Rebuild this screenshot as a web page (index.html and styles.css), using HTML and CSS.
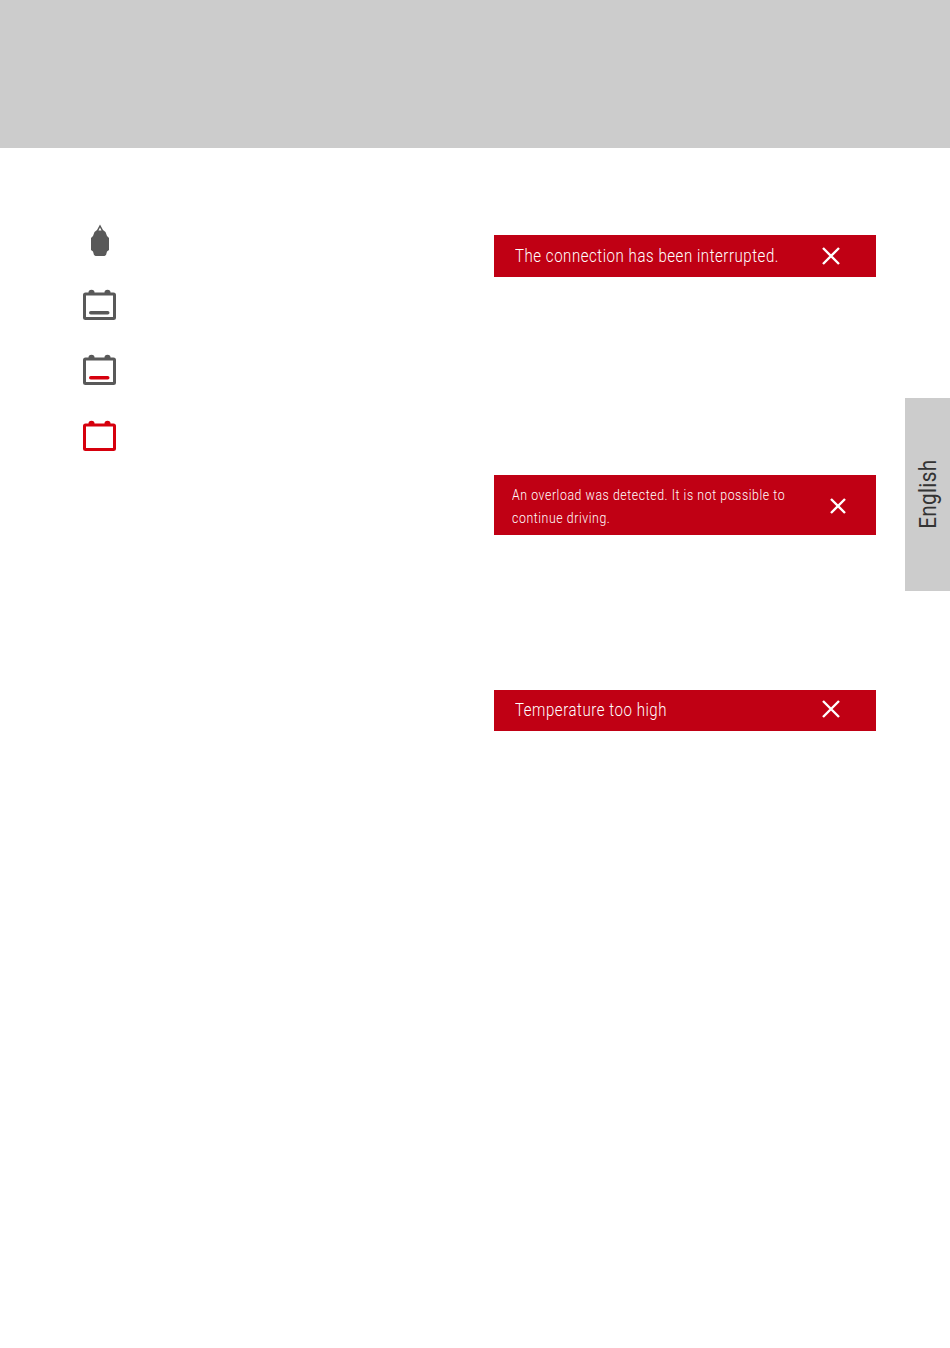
FILE: index.html
```html
<!DOCTYPE html>
<html lang="en">
<head>
<meta charset="utf-8">
<title>Status messages</title>
<link rel="stylesheet" href="styles.css">
</head>
<body>
<header class="top-band"></header>
<main class="content">
  <div class="icons">
    <svg class="icon icon-plug" width="34" height="32" viewBox="0 0 34 32">
      <path class="plug-fill" d="M17 .5 20 6 22.500 8 24 12 26 14V26L24 27.500 23 31 21.500 32H12.500L11 31 10 27.500 8 26V14L10 12 11.500 8 14 6Z"/>
      <path class="plug-cut" d="M17 3.500 15.500 6.500H18.500Z"/>
    </svg>
    <svg class="icon icon-batt" width="34" height="32" viewBox="0 0 34 32">
      <path class="batt-term" d="M5.500 4.500V3.500Q5.500 .8 8.500 .8 11.500 .8 11.500 3.500V4.500ZM21.500 4.500V3.500Q21.500 .8 24.500 .8 27.500 .8 27.500 3.500V4.500Z"/>
      <rect class="batt-body" x="1.500" y="5" width="30" height="24.500" rx="1"/>
      <rect class="level-grey" x="6" y="22" width="20.500" height="3.500" rx="1.750"/>
    </svg>
    <svg class="icon icon-batt" width="34" height="32" viewBox="0 0 34 32">
      <path class="batt-term" d="M5.500 4.500V3.500Q5.500 .8 8.500 .8 11.500 .8 11.500 3.500V4.500ZM21.500 4.500V3.500Q21.500 .8 24.500 .8 27.500 .8 27.500 3.500V4.500Z"/>
      <rect class="batt-body" x="1.500" y="5" width="30" height="24.500" rx="1"/>
      <rect class="level-red" x="6" y="22" width="20.500" height="3.500" rx="1.750"/>
    </svg>
    <svg class="icon icon-batt icon-alert" width="34" height="32" viewBox="0 0 34 32">
      <path class="batt-term" d="M5.500 4.500V3.500Q5.500 .8 8.500 .8 11.500 .8 11.500 3.500V4.500ZM21.500 4.500V3.500Q21.500 .8 24.500 .8 27.500 .8 27.500 3.500V4.500Z"/>
      <rect class="batt-body" x="1.500" y="5" width="30" height="24.500" rx="1"/>
    </svg>
  </div>
  <div class="alerts">
    <div class="alert alert-first">
      <span class="alert-text">The connection has been interrupted.</span>
      <svg class="close" width="20" height="20" viewBox="0 0 20 20"><path d="M2 2 18 18M18 2 2 18"/></svg>
    </div>
    <div class="alert alert-small">
      <span class="alert-text">An overload was detected. It is not possible to<br>continue driving.</span>
      <svg class="close" width="18" height="18" viewBox="0 0 18 18"><path d="M2 2 16 16M16 2 2 16"/></svg>
    </div>
    <div class="alert alert-last">
      <span class="alert-text">Temperature too high</span>
      <svg class="close" width="20" height="20" viewBox="0 0 20 20"><path d="M2 2 18 18M18 2 2 18"/></svg>
    </div>
  </div>
</main>
<aside class="lang-tab"><span class="lang-label">English</span></aside>
</body>
</html>
```
FILE: styles.css
```css
html, body {
  margin: 0;
  padding: 0;
  background: #fff;
}
body {
  height: 1348px;
  overflow: hidden;
  font-family: Roboto, "Liberation Sans", sans-serif;
  font-weight: 300;
}
.top-band {
  height: 148px;
  background: #ccc;
}
.content {
  display: flex;
  padding: 76px 74px 0 83px;
}
.icons {
  display: flex;
  flex-direction: column;
  gap: 33px;
  width: 411px;
  flex: none;
}
.icon { display: block; }
.icon-alert { margin-top: 1px; }
.plug-fill { fill: #595959; }
.plug-cut { fill: #fff; }
.batt-term { fill: #595959; }
.batt-body { fill: none; stroke: #595959; stroke-width: 3; }
.level-grey { fill: #595959; }
.level-red { fill: #d6000d; }
.icon-alert .batt-term { fill: #d6000d; }
.icon-alert .batt-body { stroke: #d6000d; }
.alerts {
  flex: 1;
  padding-top: 11px;
}
.alert {
  display: flex;
  align-items: center;
  justify-content: space-between;
  background: #c00014;
  color: #fff;
  font-size: 19px;
  letter-spacing: 0.7px;
}
.alert-text {
  display: block;
  white-space: nowrap;
  width: 0;
  flex: 1;
  transform: scaleX(0.79);
  transform-origin: left center;
}
.alert-first { height: 42px; padding: 0 35px 0 21px; }
.alert-first .alert-text { margin-top: -2px; }
.alert-small {
  height: 60px;
  margin-top: 198px;
  padding: 0 29px 0 18px;
  font-size: 15px;
  line-height: 23px;
  letter-spacing: 0.7px;
}
.alert-small .alert-text { padding-top: 4px; transform: scaleX(0.82); }
.alert-small .close { margin-top: 2px; }
.alert-last { height: 41px; margin-top: 155px; padding: 0 35px 0 21px; }
.alert-last .alert-text, .alert-last .close { margin-top: -3px; }
.close { flex: none; }
.close path { fill: none; stroke: #fff; stroke-width: 2.400; }
.lang-tab {
  position: absolute;
  top: 398px;
  right: 0;
  width: 45px;
  height: 193px;
  background: #ccc;
  display: flex;
  align-items: center;
  justify-content: center;
}
.lang-label {
  writing-mode: vertical-rl;
  transform: rotate(180deg) scaleY(0.86);
  font-size: 24px;
  font-weight: 400;
  letter-spacing: 0.4px;
  color: #333;
}
```
